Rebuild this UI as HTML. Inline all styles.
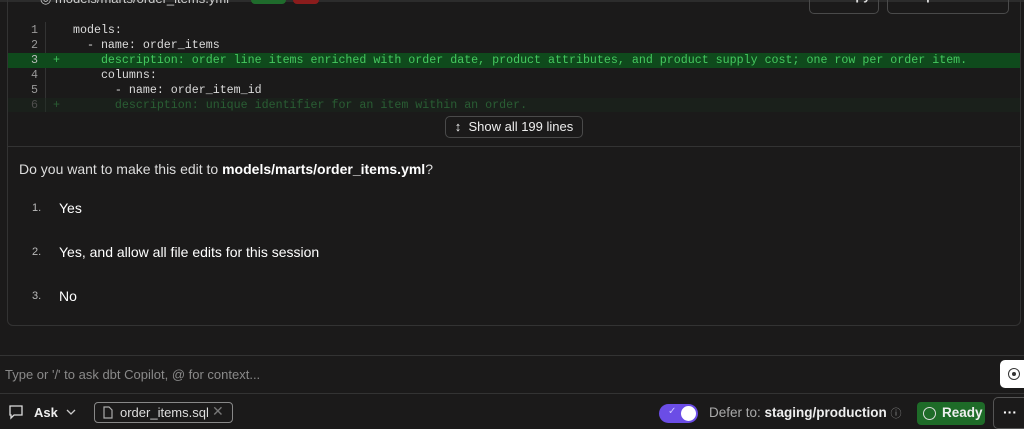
<!DOCTYPE html>
<html><head><meta charset="utf-8"><style>
*{margin:0;padding:0;box-sizing:border-box}
body{width:1024px;height:428px;background:#1b1a1a;overflow:hidden;position:relative;font-family:"Liberation Sans",sans-serif;color:#e8e8e8}
.abs{position:absolute}
.card{left:7px;top:-10px;width:1014px;height:336px;border:1px solid #333;border-radius:6px}
.mono{font-family:"Liberation Mono",monospace;font-size:11.65px;white-space:pre}
.ln{position:absolute;left:0;width:30px;text-align:right;color:#9a9a9a}
.row{position:absolute;left:8px;width:1012px;height:15px;line-height:15px}
.code{position:absolute;left:65px;color:#dcdcdc}
.btn{border:1px solid #4a4a4a;border-radius:5px;color:#ddd;font-size:13px}
</style></head><body>
<div class="abs" style="left:0;top:0;width:1024px;height:2px;background:#2c2c2c"></div>
<div class="abs card"></div>
<div class="abs" style="left:40px;top:-9px;font-size:13px;color:#ccc">◎ models/marts/order_items.yml</div>
<div class="abs" style="left:251px;top:-8px;width:35px;height:12px;background:#1f6b2c;border-radius:4px"></div>
<div class="abs" style="left:293px;top:-8px;width:26px;height:12px;background:#8a1c1c;border-radius:4px"></div>
<div class="abs btn" style="left:809px;top:-10px;width:70px;height:24px;padding:0 0 0 28px;font-weight:bold;line-height:10px">Copy</div>
<div class="abs btn" style="left:887px;top:-10px;width:122px;height:24px;padding:0 0 0 28px;font-weight:bold;line-height:10px">Open in editor</div>
<div class="abs" style="left:45px;top:22px;width:1px;height:94px;background:#333"></div>
<div class="row mono" style="top:23px"><span class="ln">1</span><span class="code">models:</span></div>
<div class="row mono" style="top:38px"><span class="ln">2</span><span class="code">  - name: order_items</span></div>
<div class="row mono" style="top:53px;background:#0f4a1c"><span class="ln" style="color:#bbb">3</span><span style="position:absolute;left:45px;color:#3fc05a">+</span><span class="code" style="color:#45c95f">    description: order line items enriched with order date, product attributes, and product supply cost; one row per order item.</span></div>
<div class="row mono" style="top:68px"><span class="ln">4</span><span class="code">    columns:</span></div>
<div class="row mono" style="top:83px"><span class="ln">5</span><span class="code">      - name: order_item_id</span></div>
<div class="row mono" style="top:98px;background:#1a2b1d;opacity:.4"><span class="ln">6</span><span style="position:absolute;left:45px;color:#3fc05a">+</span><span class="code" style="color:#3fc05a">      description: unique identifier for an item within an order.</span></div>
<div class="abs" style="left:8px;top:112px;width:1012px;height:34px;background:#1b1a1a"></div>
<div class="abs btn" style="left:445px;top:116px;width:138px;height:22px;text-align:center;line-height:20px;font-size:13px;color:#eee">↕&nbsp; Show all 199 lines</div>
<div class="abs" style="left:8px;top:146px;width:1012px;height:1px;background:#333"></div>
<div class="abs" style="left:19px;top:161px;font-size:14px;color:#ddd">Do you want to make this edit to <b style="color:#fff">models/marts/order_items.yml</b>?</div>
<div class="abs" style="left:32px;top:202px;font-size:11px;color:#bbb">1.</div><div class="abs" style="left:59px;top:200px;font-size:14px;color:#fff">Yes</div>
<div class="abs" style="left:32px;top:246px;font-size:11px;color:#bbb">2.</div><div class="abs" style="left:59px;top:244px;font-size:14px;color:#fff">Yes, and allow all file edits for this session</div>
<div class="abs" style="left:32px;top:290px;font-size:11px;color:#bbb">3.</div><div class="abs" style="left:59px;top:288px;font-size:14px;color:#fff">No</div>
<div class="abs" style="left:0;top:355px;width:1024px;height:1px;background:#333"></div>
<div class="abs" style="left:5px;top:367px;font-size:13px;color:#8a8a8a">Type or '/' to ask dbt Copilot, @ for context...</div>
<div class="abs" style="left:1000px;top:360px;width:30px;height:28px;background:#fff;border-radius:5px"></div>
<div class="abs" style="left:1008px;top:368px;width:12px;height:12px;border:1.5px solid #333;border-radius:50%"></div>
<div class="abs" style="left:1012px;top:372px;width:4px;height:4px;background:#333;border-radius:50%"></div>
<div class="abs" style="left:0;top:393px;width:1024px;height:1px;background:#333"></div>
<svg class="abs" style="left:9px;top:405px" width="14" height="15" viewBox="0 0 14 15"><path d="M1 1h12v9H5l-3 3v-3H1z" fill="none" stroke="#ddd" stroke-width="1.3"/></svg>
<div class="abs" style="left:34px;top:405px;font-size:13px;font-weight:bold;color:#eee">Ask</div>
<svg class="abs" style="left:66px;top:409px" width="10" height="6"><path d="M1 1l4 4 4-4" fill="none" stroke="#ccc" stroke-width="1.3"/></svg>
<div class="abs" style="left:94px;top:402px;width:139px;height:21px;border:1px solid #888;border-radius:4px"></div>
<svg class="abs" style="left:103px;top:406px" width="10" height="13"><path d="M1 1h5l3 3v8H1z" fill="none" stroke="#aaa" stroke-width="1.2"/></svg>
<div class="abs" style="left:120px;top:405px;font-size:13px;color:#ddd">order_items.sql</div>
<div class="abs" style="left:212px;top:403px;font-size:14px;color:#777">✕</div>
<div class="abs" style="left:659px;top:404px;width:39px;height:19px;background:#6b4de6;border-radius:10px"></div>
<div class="abs" style="left:668px;top:406px;font-size:10px;color:#cfc5ff">✓</div>
<div class="abs" style="left:681px;top:406px;width:15px;height:15px;background:#fff;border-radius:50%"></div>
<div class="abs" style="left:709px;top:405px;font-size:13.5px;color:#aaa">Defer to: <b style="color:#eee">staging/production</b> <span style="font-size:11px;color:#888">ⓘ</span></div>
<div class="abs" style="left:917px;top:402px;width:68px;height:23px;background:#1e6b28;border-radius:4px"></div>
<div class="abs" style="left:923px;top:407px;width:13px;height:13px;border:1.4px solid #ddd;border-radius:50%"></div>
<div class="abs" style="left:942px;top:405px;font-size:13.5px;font-weight:bold;color:#eee">Ready</div>
<div class="abs" style="left:993px;top:397px;width:40px;height:32px;border:1px solid #555;border-radius:5px;font-size:14px;color:#fff;padding:6px 0 0 9px;font-weight:bold">···</div>
</body></html>
